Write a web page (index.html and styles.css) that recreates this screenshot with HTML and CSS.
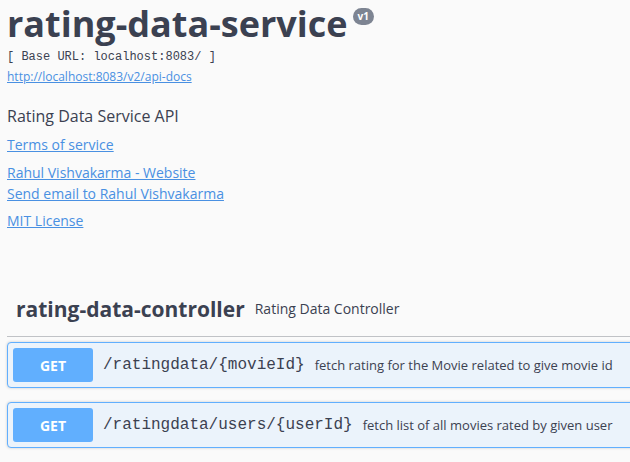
FILE: index.html
```html
<!DOCTYPE html>
<html>
<head>
<meta charset="utf-8">
<link rel="stylesheet" href="styles.css">
</head>
<body>
<div class="page">
  <div class="info">
    <h2 class="title">rating-data-service <span class="version">v1</span></h2>
    <div class="base-url">[ Base URL: localhost:8083/ ]</div>
    <a class="spec-link" href="#">http://localhost:8083/v2/api-docs</a>
    <div class="description">Rating Data Service API</div>
    <div class="link-row"><a href="#">Terms of service</a></div>
    <div class="link-row contact"><a href="#">Rahul Vishvakarma - Website</a><a href="#">Send email to Rahul Vishvakarma</a></div>
    <div class="link-row license"><a href="#">MIT License</a></div>
  </div>
  <div class="tag">
    <h4 class="tag-header"><span class="tag-name">rating-data-controller</span><span class="tag-desc">Rating Data Controller</span></h4>
    <div class="opblock">
      <span class="method">GET</span>
      <span class="path">/ratingdata/{movieId}</span>
      <span class="summary">fetch rating for the Movie related to give movie id</span>
    </div>
    <div class="opblock">
      <span class="method">GET</span>
      <span class="path">/ratingdata/users/{userId}</span>
      <span class="summary">fetch list of all movies rated by given user</span>
    </div>
  </div>
</div>
</body>
</html>
```
FILE: styles.css
```css
html, body {
  margin: 0;
  padding: 0;
  overflow: hidden;
  background: #fafafa;
}
body {
  font-family: "Open Sans", sans-serif;
  color: #3b4151;
}
.page {
  width: 680px;
  padding: 0 0 0 7px;
}
.info {
  display: flex;
  flex-direction: column;
  align-items: flex-start;
}
.title {
  margin: 0;
  font-size: 36px;
  font-weight: 700;
  line-height: 48px;
  color: #3b4151;
  display: flex;
  align-items: flex-start;
}
.version {
  margin-left: 5px;
  margin-top: 8px;
  background: #7d8492;
  color: #fff;
  font-size: 10px;
  font-weight: 700;
  line-height: 17px;
  padding: 0 5px;
  border-radius: 57px;
}
.base-url {
  font-family: "Liberation Mono", monospace;
  font-size: 12px;
  line-height: 16px;
  color: #3b4151;
  margin-top: 1px;
}
.spec-link {
  font-size: 12px;
  line-height: 16px;
  color: #4990e2;
  margin-top: 4px;
}
.description {
  font-size: 16px;
  line-height: 20px;
  margin-top: 21px;
  color: #3b4151;
}
.link-row {
  display: flex;
  flex-direction: column;
  margin-top: 8px;
}
.link-row.contact {
  margin-top: 7px;
}
.link-row.license {
  margin-top: 6px;
}
.link-row a {
  font-size: 14px;
  line-height: 21px;
  color: #4990e2;
}
.tag {
  margin-top: 50px;
}
.tag-header {
  margin: 0;
  display: flex;
  align-items: center;
  padding: 10px 10px 10px 9px;
  border-bottom: 1px solid rgba(59,65,81,.3);
  height: 35px;
  box-sizing: content-box;
}
.tag-name {
  font-size: 21px;
  font-weight: 700;
  color: #3b4151;
}
.tag-desc {
  font-size: 14px;
  font-weight: 400;
  margin-left: 10px;
  color: #3b4151;
}
.opblock {
  margin-top: 5px;
  margin-bottom: 14px;
  display: flex;
  align-items: center;
  border: 1px solid #61affe;
  background: #ebf3fb;
  border-radius: 4px;
  padding: 5px;
  box-shadow: 0 0 3px rgba(0,0,0,.19);
}
.opblock + .opblock {
  margin-top: 0;
}
.method {
  width: 80px;
  height: 34px;
  background: #61affe;
  color: #fff;
  border-radius: 3px;
  font-size: 14px;
  font-weight: 700;
  display: flex;
  align-items: center;
  justify-content: center;
  flex-shrink: 0;
}
.path {
  font-family: "Liberation Mono", monospace;
  font-size: 16px;
  font-weight: 400;
  color: #3b4151;
  padding: 0 10px;
}
.summary {
  font-size: 13px;
  color: #3b4151;
  white-space: nowrap;
}
```
